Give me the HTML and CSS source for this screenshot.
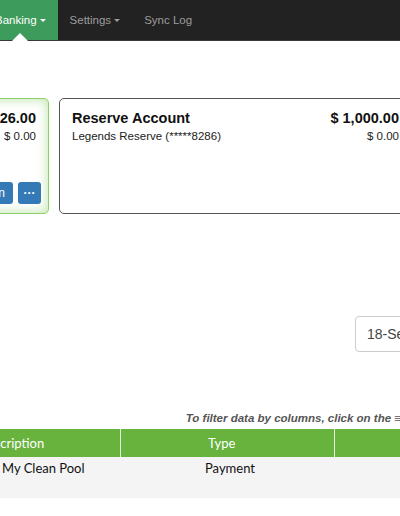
FILE: index.html
```html
<!DOCTYPE html>
<html>
<head>
<meta charset="utf-8">
<link rel="stylesheet" href="styles.css">
</head>
<body>
<div class="page">
  <nav class="nav">
    <div class="nav-item active">Banking<span class="caret"></span></div>
    <div class="nav-item">Settings<span class="caret"></span></div>
    <div class="nav-item">Sync Log</div>
  </nav>
  <main class="main">
    <section class="cards">
      <div class="card card-selected">
        <div class="card-row">
          <span class="card-title">Operating Account</span>
          <span class="card-amount">$ 2,126.00</span>
        </div>
        <div class="card-row card-sub">
          <span>Legends Operating (*****4410)</span>
          <span>$ 0.00</span>
        </div>
        <div class="card-actions">
          <button class="btn">Reconciliation</button>
          <button class="btn btn-dots">&middot;&middot;&middot;</button>
        </div>
      </div>
      <div class="card">
        <div class="card-row">
          <span class="card-title">Reserve Account</span>
          <span class="card-amount">$ 1,000.00</span>
        </div>
        <div class="card-row card-sub">
          <span>Legends Reserve (*****8286)</span>
          <span>$ 0.00</span>
        </div>
      </div>
    </section>
    <div class="date-row">
      <div class="date-input">18-Sep-2024</div>
    </div>
    <div class="filter-hint">To filter data by columns, click on the &#8801;</div>
    <div class="table">
      <div class="th th-desc">Description</div>
      <div class="th th-type">Type</div>
      <div class="th th-amt"></div>
      <div class="td td-desc">My Clean Pool</div>
      <div class="td td-type">Payment</div>
      <div class="td td-amt"></div>
    </div>
  </main>
</div>
</body>
</html>
```
FILE: styles.css
```css
* { box-sizing: border-box; }
html, body { margin: 0; padding: 0; background: #fff; overflow: hidden; }
body { font-family: "Liberation Sans", Arial, sans-serif; }

.page {
  width: 740px;
  margin-left: -310px;
}

.nav {
  display: flex;
  height: 41px;
  background: #222;
  border-bottom: 1px solid #3a3a3a;
  padding-left: 293px;
}
.nav-item {
  position: relative;
  display: flex;
  align-items: center;
  height: 40px;
  padding: 0 12px;
  font-size: 11.5px;
  color: #9d9d9d;
}
.nav-item.active {
  background: #3d9b5b;
  color: #fff;
}
.nav-item.active::after {
  content: "";
  position: absolute;
  left: 50%;
  bottom: -1px;
  margin-left: -8px;
  border-left: 8px solid transparent;
  border-right: 8px solid transparent;
  border-bottom: 8px solid #fff;
}
.caret {
  display: inline-block;
  margin-left: 3px;
  margin-top: 1px;
  border-top: 3px solid currentColor;
  border-left: 3px solid transparent;
  border-right: 3px solid transparent;
}

.main { padding-top: 57px; }

.cards {
  display: flex;
  gap: 10px;
  padding-left: 6px;
}
.card {
  width: 353px;
  height: 116px;
  border: 1px solid #555;
  border-radius: 5px;
  padding: 10px 12px 9px 12px;
  display: flex;
  flex-direction: column;
  color: #111;
}
.card-selected {
  border-color: #8ed06a;
  box-shadow: inset 0 0 12px rgba(128, 205, 90, 0.55);
}
.card-row {
  display: flex;
  justify-content: space-between;
  align-items: baseline;
}
.card-title, .card-amount {
  font-size: 14.5px;
  font-weight: bold;
  line-height: 18px;
}
.card-sub {
  font-size: 11.5px;
  line-height: 14px;
  margin-top: 2px;
  color: #222;
}
.card-actions {
  margin-top: auto;
  margin-right: -5px;
  display: flex;
  justify-content: flex-end;
  gap: 5px;
}
.btn {
  height: 22px;
  border: 0;
  border-radius: 3px;
  background: #337ab7;
  color: #fff;
  font-family: "Liberation Sans", Arial, sans-serif;
  font-size: 12px;
  padding: 0 8px;
  line-height: 22px;
}
.btn-dots {
  width: 23px;
  padding: 0;
  font-weight: bold;
  letter-spacing: 0;
}

.date-row {
  margin-top: 102px;
  padding-left: 665px;
}
.date-input {
  width: 120px;
  height: 36px;
  border: 1px solid #ccc;
  border-radius: 4px;
  padding: 0 11px;
  font-size: 14px;
  line-height: 34px;
  color: #444;
  white-space: nowrap;
}

.filter-hint {
  margin-top: 59px;
  width: 711px;
  text-align: right;
  font-size: 11.5px;
  line-height: 14px;
  font-weight: bold;
  font-style: italic;
  color: #555;
  white-space: nowrap;
}

.table {
  margin-top: 4px;
  display: grid;
  grid-template-columns: 431px 214px 95px;
  font-family: Lato, "Open Sans", sans-serif;
  font-size: 13px;
}
.th {
  height: 28px;
  background: #68b23e;
  color: #fff;
  line-height: 28px;
  white-space: nowrap;
}
.th-desc { padding-left: 288px; border-right: 1px solid #e6f2de; }
.th-type { padding-left: 87px; border-right: 1px solid #e6f2de; }
.td {
  height: 41px;
  background: #f4f4f4;
  color: #111;
  padding-top: 3px;
  line-height: 16px;
  white-space: nowrap;
}
.td-desc { padding-left: 312px; }
.td-type { padding-left: 84px; }
```
